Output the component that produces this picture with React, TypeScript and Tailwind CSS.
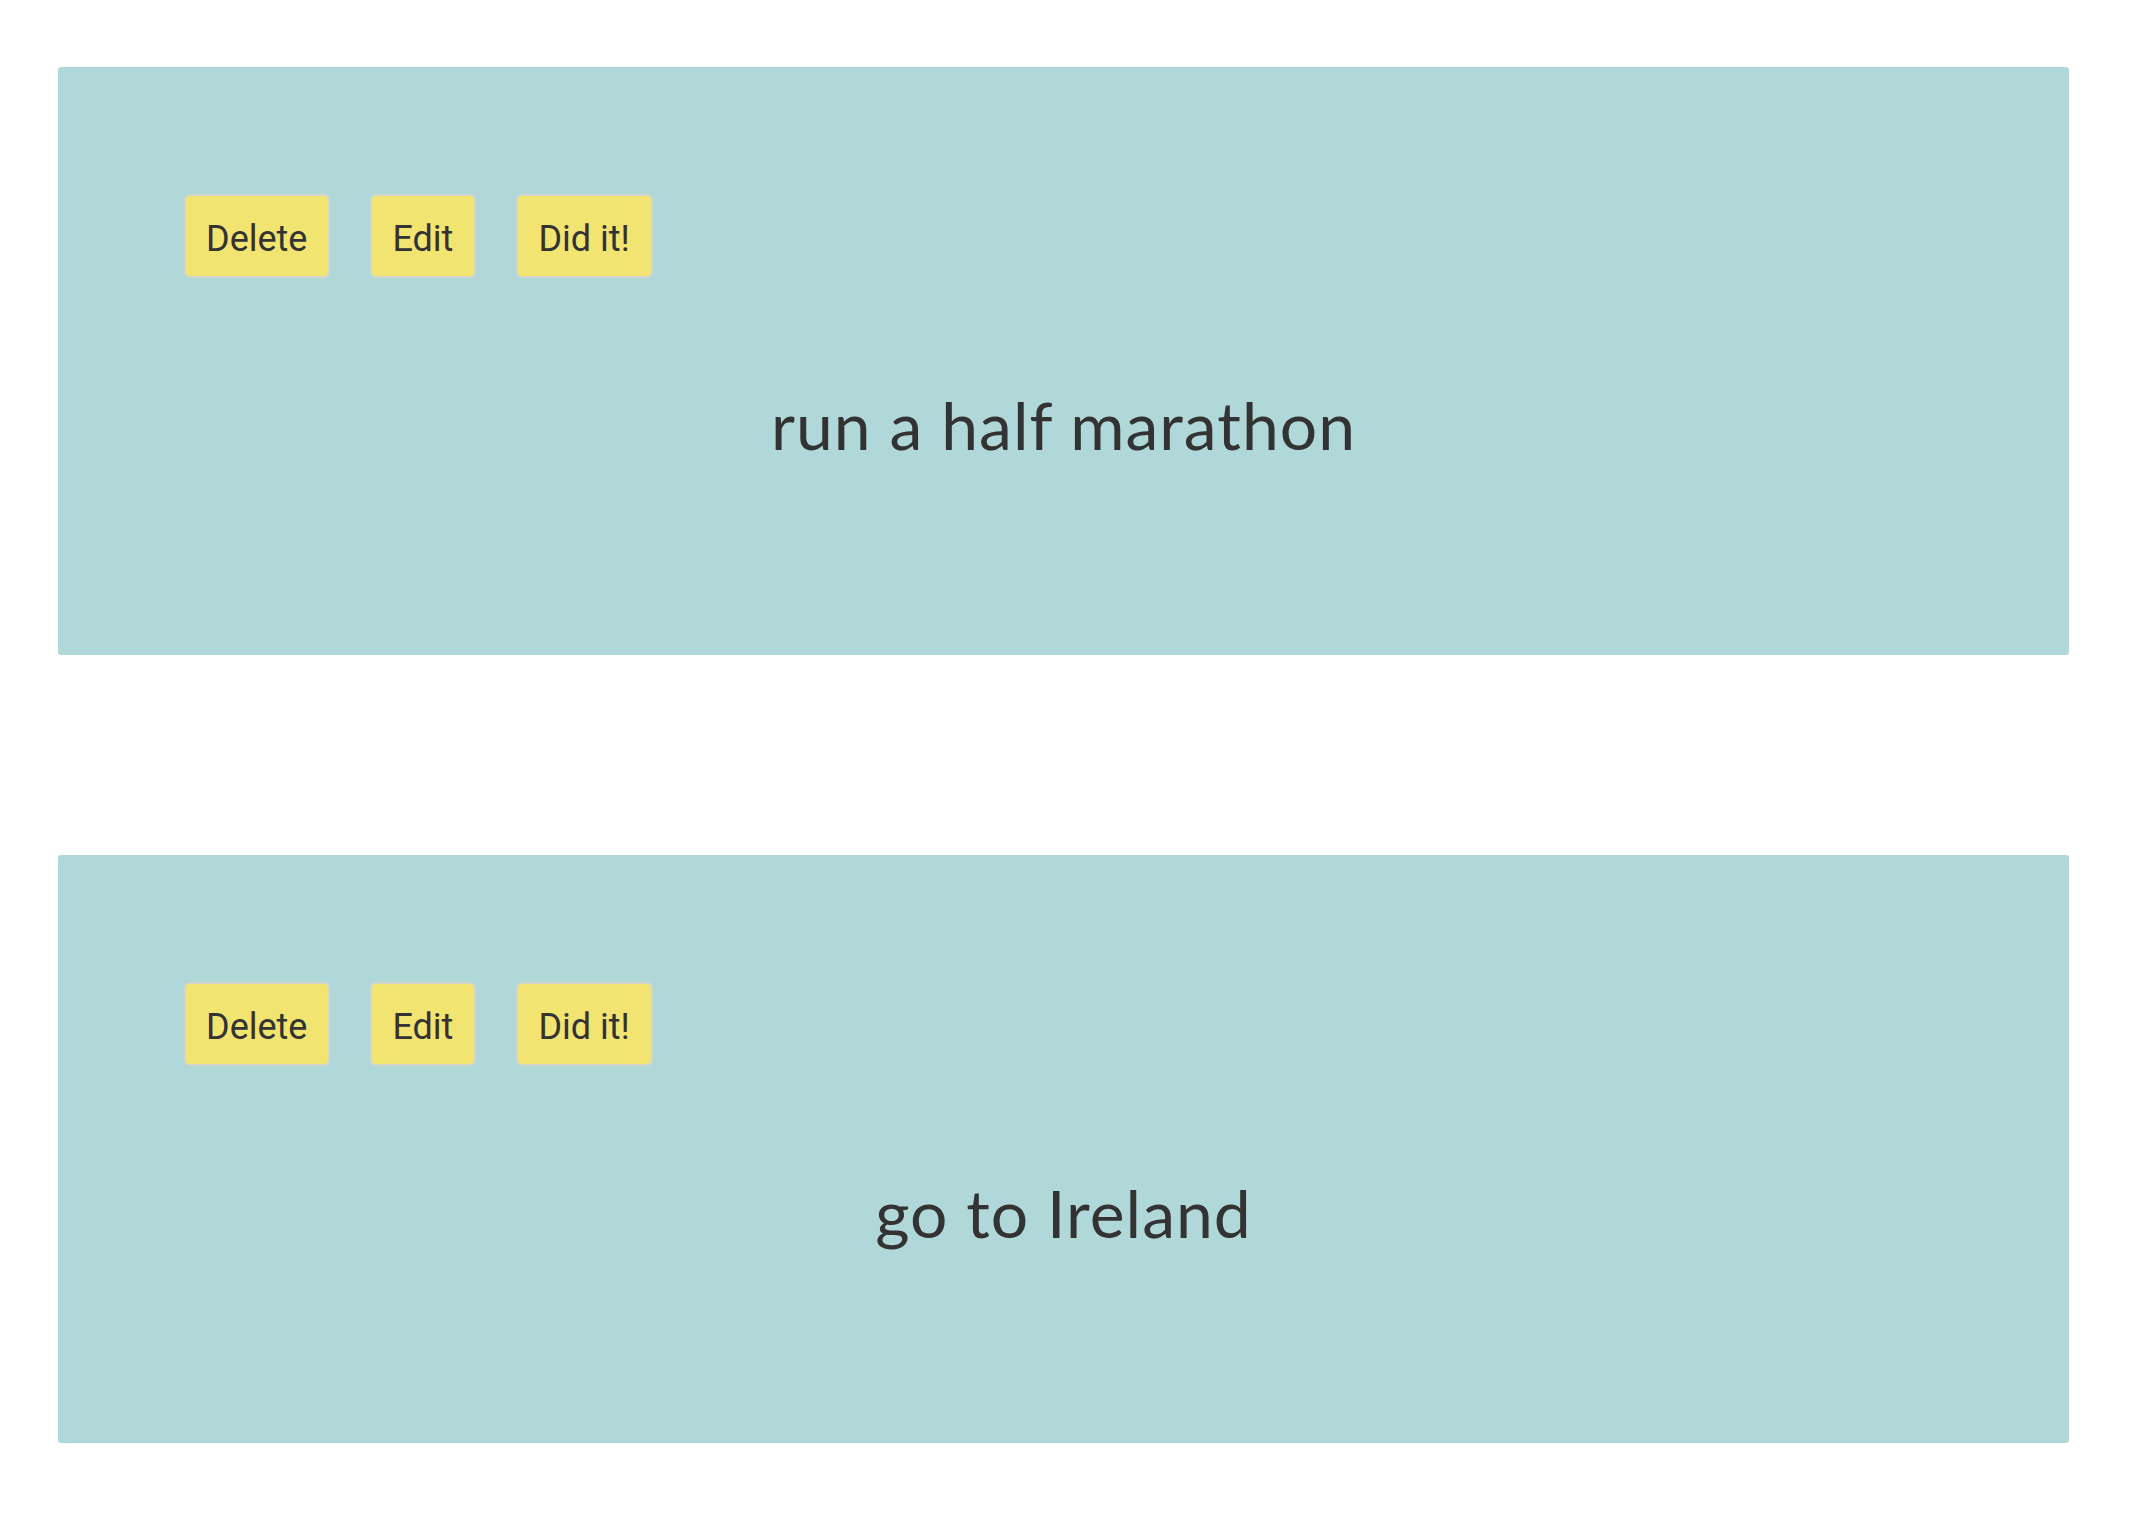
const goals = ["run a half marathon", "go to Ireland"];

function GoalCard({ title }: { title: string }) {
  return (
    <div className="ml-[58px] w-[2011px] h-[588px] bg-[#b1d8d8] rounded-[3px] pt-[127px] px-[126px]">
      <div className="flex gap-[40px]">
        {["Delete", "Edit", "Did it!"].map((label) => (
          <button
            key={label}
            className="h-[84px] pl-[20px] pr-[21px] pt-[5px] flex items-center bg-[#f1e471] border-2 border-[#d4d6cc] rounded-[6px] text-[36px] text-[#333333] font-['Roboto',sans-serif]"
          >
            {label}
          </button>
        ))}
      </div>
      <h2 className="mt-[115px] -ml-[126px] -mr-[126px] text-center text-[66px] leading-[64px] text-[#333333] font-['Lato',sans-serif] tracking-[1px]">
        {title}
      </h2>
    </div>
  );
}

export default function App() {
  return (
    <div className="min-h-[1540px] bg-white pt-[67px] flex flex-col gap-[200px]">
      {goals.map((g) => (
        <GoalCard key={g} title={g} />
      ))}
    </div>
  );
}
